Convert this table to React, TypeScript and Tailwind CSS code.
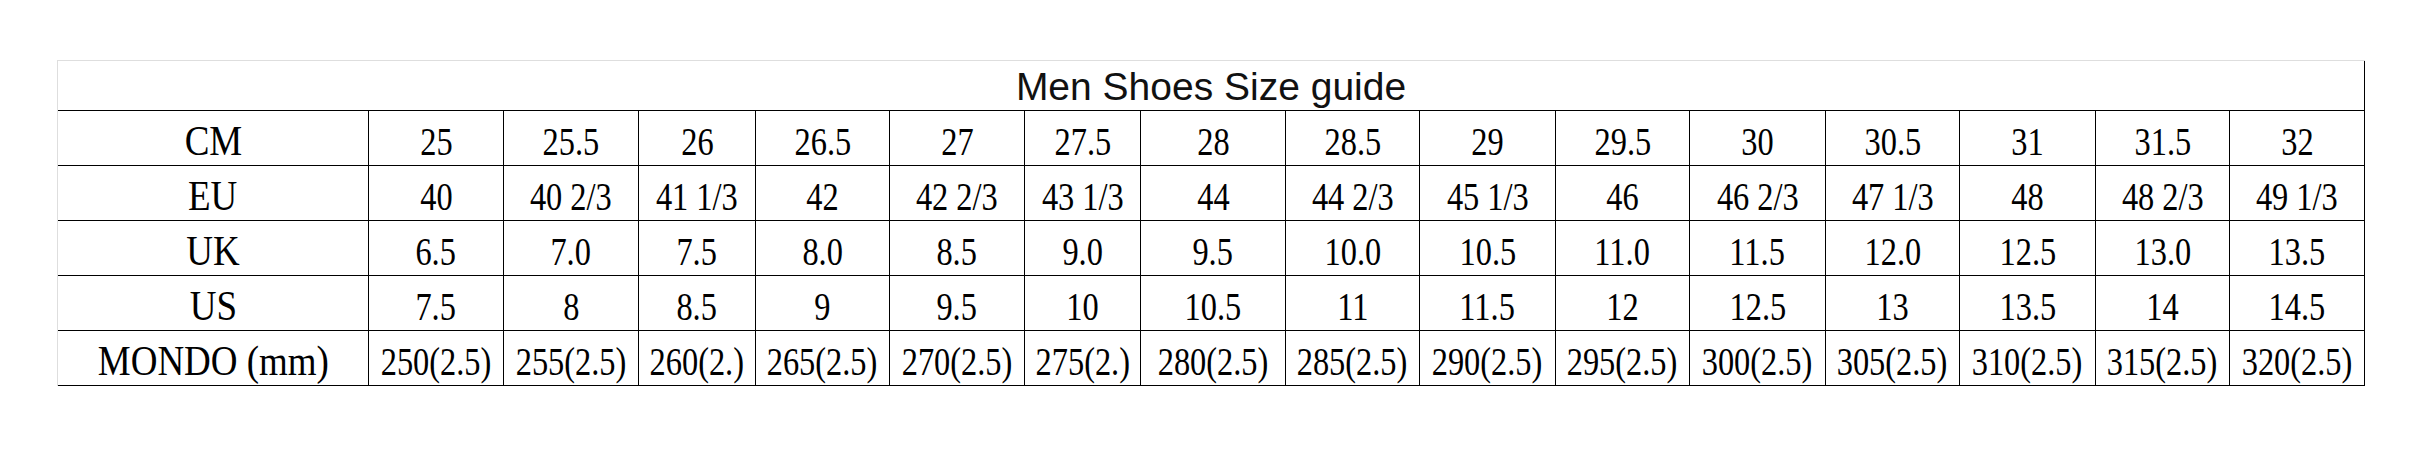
import React from "react";

const cols = [311, 135, 135, 117, 134, 135, 116, 145, 134, 136, 134, 136, 134, 136, 134, 135];

const rows: string[][] = [
  ["CM", "25", "25.5", "26", "26.5", "27", "27.5", "28", "28.5", "29", "29.5", "30", "30.5", "31", "31.5", "32"],
  ["EU", "40", "40 2/3", "41 1/3", "42", "42 2/3", "43 1/3", "44", "44 2/3", "45 1/3", "46", "46 2/3", "47 1/3", "48", "48 2/3", "49 1/3"],
  ["UK", "6.5", "7.0", "7.5", "8.0", "8.5", "9.0", "9.5", "10.0", "10.5", "11.0", "11.5", "12.0", "12.5", "13.0", "13.5"],
  ["US", "7.5", "8", "8.5", "9", "9.5", "10", "10.5", "11", "11.5", "12", "12.5", "13", "13.5", "14", "14.5"],
  ["MONDO (mm)", "250(2.5)", "255(2.5)", "260(2.)", "265(2.5)", "270(2.5)", "275(2.)", "280(2.5)", "285(2.5)", "290(2.5)", "295(2.5)", "300(2.5)", "305(2.5)", "310(2.5)", "315(2.5)", "320(2.5)"],
];

export default function App() {
  return (
    <div className="w-[2425px] h-[449px] bg-white pt-[60px] pl-[57px]">
      <div
        className="grid w-[2308px] border-l border-t border-[#dedede] grid-cols-[311px_135px_135px_117px_134px_135px_116px_145px_134px_136px_134px_136px_134px_136px_134px_135px]"
      >
        <div className="col-span-16 h-[50px] border-r border-b border-black flex items-center justify-center pt-[4px]">
          <span
            className="text-[39px] text-[#111] whitespace-nowrap"
            style={{ fontFamily: '"Liberation Sans", Arial, sans-serif' }}
          >
            Men Shoes Size guide
          </span>
        </div>
        {rows.map((r, ri) =>
          r.map((c, ci) => (
            <div
              key={`${ri}-${ci}`}
              className={
                "h-[55px] border-r border-b border-black flex items-center justify-center overflow-visible " +
                (ci === 0 ? "pt-[6px]" : "pt-[8px]")
              }
            >
              <span
                className={
                  "inline-block shrink-0 whitespace-nowrap text-black " +
                  (ci === 0 ? "text-[43px] scale-x-[0.86]" : "text-[41px] scale-x-[0.79]")
                }
                style={{ fontFamily: '"Liberation Serif", "Times New Roman", serif' }}
              >
                {c}
              </span>
            </div>
          ))
        )}
      </div>
    </div>
  );
}
